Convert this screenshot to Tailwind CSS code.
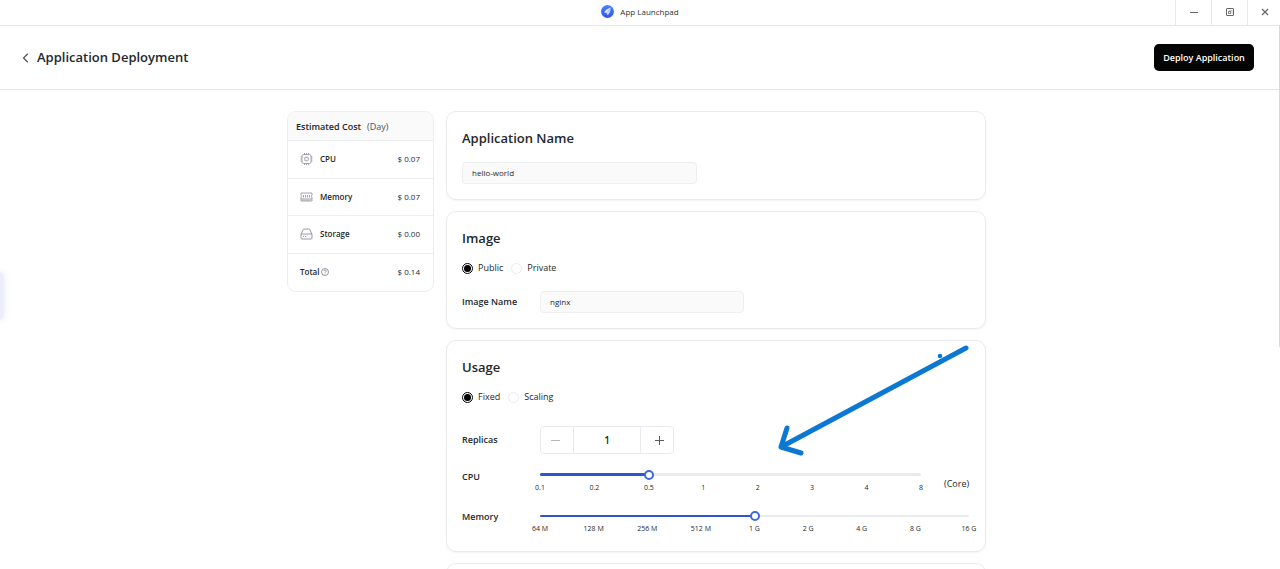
<!DOCTYPE html>
<html lang="en">
<head>
  <meta charset="UTF-8" />
  <meta name="viewport" content="width=device-width, initial-scale=1.0" />
  <title>App Launchpad</title>
  <script src="https://cdn.jsdelivr.net/npm/@tailwindcss/browser@4"></script>
</head>
<body class="relative flex h-screen flex-col overflow-hidden bg-white font-['Open_Sans','Noto_Sans',sans-serif] text-[9px] text-[#24282c]">

  <!-- Window bar -->
  <header class="grid h-[26px] shrink-0 grid-cols-[1fr_auto_1fr] border-b border-[#e8e8e8]">
    <div></div>
    <div class="flex items-center gap-1.5 pb-0.5 text-[8px] text-[#333]">
      <svg class="size-[13px]" viewBox="0 0 26 26">
        <defs>
          <linearGradient id="logo" x1="0" y1="0" x2="0" y2="1">
            <stop offset="0" stop-color="#4a86fa" />
            <stop offset="1" stop-color="#3353e8" />
          </linearGradient>
        </defs>
        <circle cx="13" cy="13" r="13" fill="url(#logo)" />
        <path d="M19.500 5 Q10 8 6 14.500 L11 16 Z" fill="#e8f0ff" />
        <path d="M19.500 5 L11 16 L13 20.500 Q19 16 19.500 5 Z" fill="#c3d5ff" />
      </svg>
      <span>App Launchpad</span>
    </div>
    <div class="flex justify-end text-[#666]">
      <button aria-label="Minimize" class="flex w-9 items-center justify-center border-l border-[#e8e8e8] pb-0.5">
        <svg class="h-2 w-2" viewBox="0 0 8 8" stroke="currentColor"><path d="M0 4.500h8" /></svg>
      </button>
      <button aria-label="Restore" class="flex w-9 items-center justify-center border-l border-[#e8e8e8] pb-0.5">
        <svg class="h-2 w-2" viewBox="0 0 8 8" fill="none" stroke="currentColor">
          <rect x="0.500" y="0.500" width="7" height="7" rx="0.500" />
          <rect x="2.500" y="3.500" width="2" height="2" stroke-opacity="0.700" />
          <path d="M3 2.500h3v3" stroke-opacity="0.400" />
        </svg>
      </button>
      <button aria-label="Close" class="flex w-[33px] items-center justify-center border-l border-[#e8e8e8] pb-0.5 pl-0.5">
        <svg class="h-2 w-2" viewBox="0 0 8 8" stroke="currentColor" stroke-width="1.200"><path d="M1 1l6 6M7 1L1 7" /></svg>
      </button>
    </div>
  </header>

  <!-- Page heading -->
  <div class="flex h-16 shrink-0 items-center border-b border-[#e5e7e9] pr-[26px] pl-[22px]">
    <button aria-label="Back" class="mr-2 text-[#485058]">
      <svg class="h-[10px] w-[7px]" viewBox="0 0 7 10" fill="none" stroke="currentColor" stroke-width="1.200"><path d="M5.800 0.800L1.500 5l4.300 4.200" /></svg>
    </button>
    <h1 class="text-[13px] font-semibold">Application Deployment</h1>
    <button class="ml-auto h-[27px] w-[100px] rounded-[5px] bg-[#050505] text-[9px] font-semibold text-white">Deploy Application</button>
  </div>

  <main class="flex flex-1 items-start justify-center gap-3 overflow-y-auto pt-[21px] pr-[7px] [scrollbar-width:none]">

    <!-- Estimated cost -->
    <aside class="w-[147px] shrink-0 overflow-hidden rounded-[9px] border border-[#eceef0]">
      <div class="flex h-[29px] items-center gap-1.5 border-b border-[#eceef0] bg-[#fafafb] px-2 pt-px text-[9px]">
        <h2 class="font-semibold">Estimated Cost</h2>
        <span class="text-[#485264]">(Day)</span>
      </div>
      <ul class="grid h-[150px] grid-rows-4 divide-y divide-[#eceef0] text-[8px]">
        <li class="flex items-center pr-[13px] pl-3">
          <svg class="mr-[7px] h-3 w-[13px] text-[#8a9099]" viewBox="0 0 26 24" fill="none" stroke="currentColor" stroke-width="1.600">
            <rect x="4" y="3" width="18" height="18" rx="3" />
            <rect x="9.500" y="8.500" width="7" height="7" rx="1" />
            <path d="M9 3V0M13 3V0M17 3V0M9 24v-3M13 24v-3M17 24v-3M4 8H1M4 12H1M4 16H1M25 8h-3M25 12h-3M25 16h-3" />
          </svg>
          <span class="font-semibold">CPU</span>
          <span class="ml-auto">$ 0.07</span>
        </li>
        <li class="flex items-center pr-[13px] pl-3">
          <svg class="mr-[7px] h-3 w-[13px] text-[#8a9099]" viewBox="0 0 26 24" fill="none" stroke="currentColor" stroke-width="1.600">
            <path d="M2 4h22v5c-1.500 0-1.500 3 0 3v8H2v-8c1.500 0 1.500-3 0-3z" />
            <path d="M7 8v5M11 8v5M15 8v5M19 8v5M2 16h22M6 17v3M10 17v3M14 17v3M18 17v3" />
          </svg>
          <span class="font-semibold">Memory</span>
          <span class="ml-auto">$ 0.07</span>
        </li>
        <li class="flex items-center pr-[13px] pl-3">
          <svg class="mr-[7px] h-3 w-[13px] text-[#8a9099]" viewBox="0 0 26 24" fill="none" stroke="currentColor" stroke-width="1.800">
            <path d="M2 13L6 3.500Q6.500 2 8 2h10q1.500 0 2 1.500L24 13" />
            <rect x="2" y="12" width="22" height="10" rx="2" />
            <path d="M6 17h2M10 17h2" />
          </svg>
          <span class="font-semibold">Storage</span>
          <span class="ml-auto">$ 0.00</span>
        </li>
        <li class="flex items-center pr-[13px] pl-3">
          <span class="font-semibold">Total</span>
          <svg class="ml-0.5 size-2" viewBox="0 0 16 16" fill="none" stroke="#5a6270" stroke-width="1.300">
            <circle cx="8" cy="8" r="7" />
            <path d="M5.800 6.200a2.200 2.200 0 1 1 3.200 2q-1 .5-1 1.500M8 11.200v1.400" />
          </svg>
          <span class="ml-auto">$ 0.14</span>
        </li>
      </ul>
    </aside>

    <form class="flex w-[540px] shrink-0 flex-col gap-[11px]">

      <section class="rounded-[10px] border border-[#e8eaed] px-[15px] pt-4 pb-[15px] shadow-xs">
        <h2 class="text-[13px] leading-5 font-semibold"><label for="appName">Application Name</label></h2>
        <input id="appName" type="text" value="hello-world" class="mt-3.5 block h-[22px] w-[235px] rounded-[4px] border border-[#eceef0] bg-[#fafafb] px-[9px] pb-0.5 text-[8px]" />
      </section>

      <section class="rounded-[10px] border border-[#e8eaed] px-[15px] pt-4 pb-[15px] shadow-xs">
        <h2 class="text-[13px] leading-5 font-semibold">Image</h2>
        <div class="mt-3 flex h-4 items-center gap-2">
          <label class="flex items-center gap-[5px]">
            <input type="radio" name="image" checked class="size-[11px] appearance-none rounded-full border border-[#e8ebf0] bg-clip-content p-px checked:border-black checked:bg-black" />
            Public
          </label>
          <label class="flex items-center gap-[5px]">
            <input type="radio" name="image" class="size-[11px] appearance-none rounded-full border border-[#e8ebf0] bg-clip-content p-px checked:border-black checked:bg-black" />
            Private
          </label>
        </div>
        <div class="mt-[15px] flex items-center">
          <label for="imageName" class="w-[78px] font-semibold">Image Name</label>
          <input id="imageName" type="text" value="nginx" class="h-[22px] w-[204px] rounded-[4px] border border-[#eceef0] bg-[#fafafb] px-[9px] pb-0.5 text-[8px]" />
        </div>
      </section>

      <section class="relative rounded-[10px] border border-[#e8eaed] py-4 pr-4 pl-[15px] shadow-xs">
        <h2 class="text-[13px] leading-5 font-semibold">Usage</h2>
        <div class="mt-3 flex h-4 items-center gap-2">
          <label class="flex items-center gap-[5px]">
            <input type="radio" name="usage" checked class="size-[11px] appearance-none rounded-full border border-[#e8ebf0] bg-clip-content p-px checked:border-black checked:bg-black" />
            Fixed
          </label>
          <label class="flex items-center gap-[5px]">
            <input type="radio" name="usage" class="size-[11px] appearance-none rounded-full border border-[#e8ebf0] bg-clip-content p-px checked:border-black checked:bg-black" />
            Scaling
          </label>
        </div>

        <div class="mt-[21px] flex items-center">
          <label for="replicas" class="w-[78px] font-semibold">Replicas</label>
          <div class="flex h-7 w-[134px] rounded-[4px] border border-[#e8ebf0]">
            <button type="button" aria-label="Decrease" class="flex w-8 items-center justify-center pr-1 text-[#b4b8be]">
              <svg class="size-[9px]" viewBox="0 0 9 9" stroke="currentColor"><path d="M0 4.500h9" /></svg>
            </button>
            <input id="replicas" type="text" value="1" class="w-0 flex-1 border-x border-[#e8ebf0] text-center text-[10px] font-semibold" />
            <button type="button" aria-label="Increase" class="flex w-8 items-center justify-center pl-1 text-[#555b63]">
              <svg class="size-[9px]" viewBox="0 0 9 9" stroke="currentColor"><path d="M0 4.500h9M4.500 0v9" /></svg>
            </button>
          </div>
        </div>

        <div class="mt-[15px] flex items-start">
          <label for="cpu" class="w-[78px] leading-4 font-semibold">CPU</label>
          <div class="flex-1">
            <div class="relative flex h-[11px] items-center">
              <div class="h-[3px] flex-1 rounded-full bg-[#e9eaef]">
                <div class="h-[3px] rounded-full bg-[#2f55d4]" style="width: 28.57%"></div>
              </div>
              <input id="cpu" type="range" min="0" max="7" value="2" class="absolute inset-y-0 -left-[5px] w-[calc(100%+10px)] appearance-none bg-transparent [&::-webkit-slider-thumb]:size-[10px] [&::-webkit-slider-thumb]:appearance-none [&::-webkit-slider-thumb]:rounded-full [&::-webkit-slider-thumb]:border-2 [&::-webkit-slider-thumb]:border-[#3f68e0] [&::-webkit-slider-thumb]:bg-white" />
            </div>
            <div class="mt-0.5 flex justify-between text-[7px] leading-3 whitespace-nowrap">
              <span class="flex w-0 justify-center">0.1</span>
              <span class="flex w-0 justify-center">0.2</span>
              <span class="flex w-0 justify-center">0.5</span>
              <span class="flex w-0 justify-center">1</span>
              <span class="flex w-0 justify-center">2</span>
              <span class="flex w-0 justify-center">3</span>
              <span class="flex w-0 justify-center">4</span>
              <span class="flex w-0 justify-center">8</span>
            </div>
          </div>
          <span class="ml-[23px] w-[25px] self-end pb-0.5 leading-4">(Core)</span>
        </div>

        <div class="mt-4 flex items-start">
          <label for="memory" class="w-[78px] leading-[14px] font-semibold">Memory</label>
          <div class="flex-1">
            <div class="relative flex h-[11px] items-center">
              <div class="h-0.5 flex-1 rounded-full bg-[#e9eaef]">
                <div class="h-0.5 rounded-full bg-[#2f55d4]" style="width: 50%"></div>
              </div>
              <input id="memory" type="range" min="0" max="8" value="4" class="absolute inset-y-0 -left-[5px] w-[calc(100%+10px)] appearance-none bg-transparent [&::-webkit-slider-thumb]:size-[10px] [&::-webkit-slider-thumb]:appearance-none [&::-webkit-slider-thumb]:rounded-full [&::-webkit-slider-thumb]:border-2 [&::-webkit-slider-thumb]:border-[#3f68e0] [&::-webkit-slider-thumb]:bg-white" />
            </div>
            <div class="mt-0.5 flex justify-between text-[7px] leading-3 whitespace-nowrap">
              <span class="flex w-0 justify-center">64 M</span>
              <span class="flex w-0 justify-center">128 M</span>
              <span class="flex w-0 justify-center">256 M</span>
              <span class="flex w-0 justify-center">512 M</span>
              <span class="flex w-0 justify-center">1 G</span>
              <span class="flex w-0 justify-center">2 G</span>
              <span class="flex w-0 justify-center">4 G</span>
              <span class="flex w-0 justify-center">8 G</span>
              <span class="flex w-0 justify-center">16 G</span>
            </div>
          </div>
        </div>

        <!-- Arrow pointing at the sliders -->
        <svg class="pointer-events-none absolute top-[3px] right-[15px] h-28 w-[194px]" viewBox="0 0 194 112" fill="none" stroke="#0b78d4" stroke-width="5" stroke-linecap="round" stroke-linejoin="round">
          <path d="M190 4L5 103M11 84L5 103l20 6" />
          <circle cx="164" cy="12" r="2.300" fill="#0b78d4" stroke="none" />
        </svg>
      </section>

      <section class="h-24 shrink-0 rounded-[10px] border border-[#e8eaed] shadow-xs"></section>
    </form>
  </main>

  <!-- Side drawer handle -->
  <div class="absolute top-[272px] -left-2 h-12 w-3 rounded-[6px] bg-[#eaeefa] shadow-[0_0_8px_#e4e9f7]"></div>
  <!-- Scroll thumb -->
  <div class="absolute top-[26px] right-0 h-[321px] w-px bg-[#d8d8d8]"></div>
</body>
</html>
